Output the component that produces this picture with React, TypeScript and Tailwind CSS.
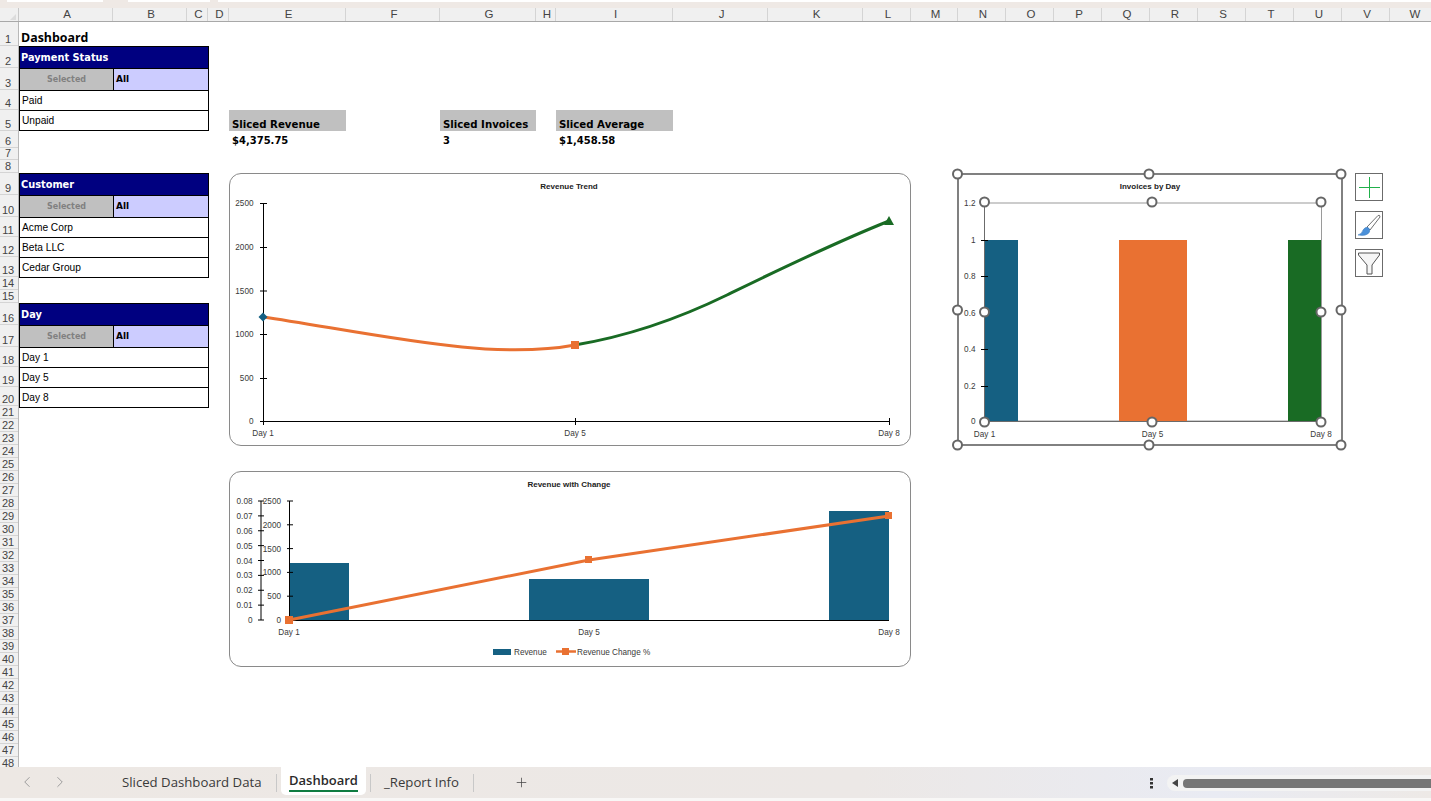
import React from "react";
import { ChevronLeft, ChevronRight, Plus } from "lucide-react";

const cols: [string, number][] = [["A",94],["B",74],["C",21],["D",21],["E",117],["F",94],["G",96],["H",20],["I",117],["J",95],["K",95],["L",48],["M",47],["N",48],["O",48],["P",48],["Q",48],["R",48],["S",48],["T",48],["U",48],["V",48],["W",48]];
const rowH = [24,22,22,20,21,17,12,13,22,22,20,20,20,13,13,22,22,20,20,19,...Array(28).fill(13)];

const sans = "font-['Liberation_Sans',Arial,sans-serif]";
const wide = "font-['DejaVu_Sans',Verdana,sans-serif]";

function Slicer({ title, items, className = "" }: { title: string; items: string[]; className?: string }) {
  return (
    <div className={`w-[190px] border-l border-r border-t border-black ${className}`}>
      <div className={`h-[22px] bg-[#000080] text-white text-[9.8px] font-bold pl-[1px] pt-[1px] flex items-center border-b border-black ${wide}`}>{title}</div>
      <div className="h-[22px] flex border-b border-black">
        <div className={`w-[94px] bg-[#c0c0c0] text-[#808080] text-[8px] font-bold flex items-center justify-center border-r border-black ${wide}`}>Selected</div>
        <div className={`flex-1 bg-[#ccccff] text-black text-[9px] font-bold flex items-center pl-[2px] ${wide}`}>All</div>
      </div>
      {items.map((t) => (
        <div key={t} className={`h-[20px] bg-white text-black text-[10.2px] flex items-center pl-[2px] border-b border-black ${sans}`}>{t}</div>
      ))}
    </div>
  );
}

function Kpi({ label, value, className = "" }: { label: string; value: string; className?: string }) {
  return (
    <div className={className}>
      <div className={`h-[21px] bg-[#c0c0c0] pl-[3px] pb-[1px] flex items-end text-[10.2px] leading-[11px] font-bold text-black ${wide}`}>{label}</div>
      <div className={`h-[17px] pl-[3px] pt-[1px] flex items-center text-[10px] font-bold text-black ${wide}`}>{value}</div>
    </div>
  );
}

const axisText = { fontFamily: "Liberation Sans, Arial, sans-serif", fontSize: 8.2, fill: "#3a3a3a" } as const;

function ChartTitle({ x, y, children }: { x: number; y: number; children: string }) {
  return <text x={x} y={y} textAnchor="middle" style={{ fontFamily: "Liberation Sans, Arial, sans-serif", fontSize: 8, fontWeight: 700, fill: "#222" }}>{children}</text>;
}

function TrendChart() {
  const ticks = [[2500,30],[2000,74],[1500,117.5],[1000,161],[500,205],[0,248]] as const;
  return (
    <div className="w-[682px] h-[273px] rounded-[12px] border border-[#8a8a8a] bg-white overflow-hidden">
      <svg width="680" height="271" viewBox="1 1 680 271" className="block">
        <ChartTitle x={340} y={15.5}>Revenue Trend</ChartTitle>
        <line x1={34.5} y1={30} x2={34.5} y2={248.5} stroke="#000" />
        <line x1={34} y1={248.5} x2={660} y2={248.5} stroke="#000" />
        {ticks.map(([v, y]) => (
          <g key={v}>
            <line x1={31} x2={38} y1={y + 0.5} y2={y + 0.5} stroke="#000" />
            <text x={24.5} y={y + 3} textAnchor="end" style={axisText}>{v}</text>
          </g>
        ))}
        {[[34,"Day 1"],[346,"Day 5"],[660,"Day 8"]].map(([x, l]) => (
          <g key={l as string}>
            <line x1={(x as number)+0.5} x2={(x as number)+0.5} y1={245} y2={252} stroke="#000" />
            <text x={x as number} y={263} textAnchor="middle" style={axisText}>{l}</text>
          </g>
        ))}
        <path d="M34 144 C 90 152, 170 168, 233 174 C 260 177, 310 179, 346 172" fill="none" stroke="#e97132" strokeWidth="3" />
        <path d="M346 172 C 400 163, 455 143, 498 122 S 600 72, 660 48" fill="none" stroke="#196b24" strokeWidth="3" />
        <polygon points="34,139.5 38.5,144 34,148.5 29.5,144" fill="#156082" />
        <rect x={342} y={168} width={8} height={8} fill="#e97132" />
        <polygon points="660,43 665,52 655,52" fill="#196b24" />
      </svg>
    </div>
  );
}

function ComboChart() {
  const left = [0.08,0.07,0.06,0.05,0.04,0.03,0.02,0.01,0];
  const right = [2500,2000,1500,1000,500,0];
  return (
    <div className="w-[682px] h-[196px] rounded-[12px] border border-[#8a8a8a] bg-white overflow-hidden mt-[25px]">
      <svg width="680" height="194" viewBox="1 1 680 194" className="block">
        <ChartTitle x={340} y={16}>Revenue with Change</ChartTitle>
        <rect x={60} y={92} width={60} height={57} fill="#156082" />
        <rect x={300} y={108} width={120} height={41} fill="#156082" />
        <rect x={600} y={40} width={60} height={109} fill="#156082" />
        <line x1={32} y1={30} x2={32} y2={149} stroke="#000" />
        <line x1={60.5} y1={30} x2={60.5} y2={149} stroke="#000" />
        <line x1={60} y1={149.5} x2={660} y2={149.5} stroke="#000" />
        {left.map((v, i) => {
          const y = 30 + (i * 119) / 8;
          return (
            <g key={v}>
              <line x1={29} x2={35} y1={y} y2={y} stroke="#000" />
              <text x={23.5} y={y + 3} textAnchor="end" style={axisText}>{v}</text>
            </g>
          );
        })}
        {right.map((v, i) => {
          const y = 30 + (i * 119) / 5;
          return (
            <g key={v}>
              <line x1={58} x2={64} y1={y} y2={y} stroke="#000" />
              <text x={52} y={y + 3} textAnchor="end" style={axisText}>{v}</text>
            </g>
          );
        })}
        {[[60,"Day 1"],[360,"Day 5"],[660,"Day 8"]].map(([x, l]) => (
          <text key={l as string} x={x as number} y={164} textAnchor="middle" style={axisText}>{l}</text>
        ))}
        <polyline points="60,149 360,89 660,45" fill="none" stroke="#e97132" strokeWidth="3" />
        <rect x={56} y={145} width={8} height={8} fill="#e97132" />
        <rect x={356} y={85} width={7} height={7} fill="#e97132" />
        <rect x={656} y={41} width={7} height={7} fill="#e97132" />
        <rect x={264} y={178} width={18} height={6} fill="#156082" />
        <text x={285} y={184} style={axisText}>Revenue</text>
        <line x1={327} x2={347} y1={180.5} y2={180.5} stroke="#e97132" strokeWidth="2.5" />
        <rect x={333} y={177} width={7} height={7} fill="#e97132" />
        <text x={348} y={184} style={axisText}>Revenue Change %</text>
      </svg>
    </div>
  );
}

function InvoiceChart() {
  const yt = [[1.2,203],[1,240],[0.8,276],[0.6,312.5],[0.4,349],[0.2,386],[0,421]] as const;
  const outer = [[957.5,174],[1149,174],[1341,174],[957.5,310],[1341,310],[957.5,445],[1149,445],[1341,445]];
  const inner = [[984.5,202],[1152,202],[1321,202],[984.5,312],[1321,312],[984.5,422],[1152,422],[1321,422]];
  return (
    <svg width="410" height="295" viewBox="945 165 410 295" className="block">
      <rect x={958} y={174} width={384} height={271} fill="#fff" stroke="#6b6b6b" strokeWidth="1.7" />
      <ChartTitle x={1150} y={189}>Invoices by Day</ChartTitle>
      <rect x={984.5} y={203} width={337} height={218} fill="none" stroke="#9a9a9a" strokeWidth="1" />
      <rect x={984} y={240} width={34} height={181} fill="#156082" />
      <rect x={1119} y={240} width={68} height={181} fill="#e97132" />
      <rect x={1288} y={240} width={33} height={181} fill="#196b24" />
      <line x1={984.5} x2={984.5} y1={203} y2={422} stroke="#6b6b6b" />
      <line x1={984} x2={1322} y1={421.5} y2={421.5} stroke="#6b6b6b" />
      {yt.map(([v, y]) => (
        <g key={v}>
          <line x1={981} x2={988} y1={y + 0.5} y2={y + 0.5} stroke="#000" />
          <text x={975.5} y={y + 3} textAnchor="end" style={axisText}>{v}</text>
        </g>
      ))}
      {[[984.5,"Day 1"],[1152.5,"Day 5"],[1321,"Day 8"]].map(([x, l]) => (
        <text key={l as string} x={x as number} y={437} textAnchor="middle" style={axisText}>{l}</text>
      ))}
      {[...outer, ...inner].map(([x, y]) => (
        <circle key={`${x}-${y}`} cx={x} cy={y} r={4.5} fill="#fff" stroke="#666" strokeWidth="2" />
      ))}
    </svg>
  );
}

function SideButton({ children }: { children: React.ReactNode }) {
  return <div className="w-[28px] h-[28px] border border-[#6b6b6b] bg-white flex items-center justify-center">{children}</div>;
}

export default function App() {
  return (
    <div className={`w-[1431px] h-[801px] bg-white flex flex-col overflow-hidden ${sans}`}>
      <div className="h-[8px] bg-[#efe9e5] shrink-0 flex gap-[3px] pl-[7px]">
        <div className="w-[96px] h-[2px] bg-white" />
        <div className="w-[82px] h-[2px] bg-white ml-[22px]" />
        <div className="flex-1 h-[2px] bg-white ml-[5px]" />
      </div>
      <div className="h-[14px] shrink-0 flex bg-[#f0f0f0] border-b border-[#a8a8a8]">
        <div className="w-[19px] shrink-0 border-r border-[#c8c8c8] relative">
          <div className="absolute right-[2px] bottom-[1px] w-0 h-0 border-l-[6px] border-l-transparent border-b-[6px] border-b-[#dcdcdc]" />
        </div>
        {cols.map(([c, w]) => (
          <div key={c} className="shrink-0 border-r border-[#d4d4d4] text-[11.5px] leading-[13px] text-[#444] text-center pl-[3px]" style={{ width: w }}>{c}</div>
        ))}
      </div>
      <div className="flex-1 min-h-0 flex overflow-hidden">
        <div className="w-[19px] shrink-0 bg-[#f0f0f0] border-r border-[#b8b8b8] overflow-hidden">
          {rowH.map((h, i) => (
            <div key={i} className="border-b border-[#d4d4d4] text-[11px] leading-[12px] text-[#444] text-center pr-[2px] flex items-end justify-center" style={{ height: h }}>{i + 1}</div>
          ))}
        </div>
        <div className="flex-1 flex min-w-0">
          <div className="w-[210px] shrink-0">
            <div className="h-[24px] pl-[2px] flex items-end text-[12.4px] leading-[16px] font-bold text-black font-['Open_Sans',sans-serif]">Dashboard</div>
            <Slicer title="Payment Status" items={["Paid", "Unpaid"]} />
            <Slicer title="Customer" items={["Acme Corp", "Beta LLC", "Cedar Group"]} className="mt-[42px]" />
            <Slicer title="Day" items={["Day 1", "Day 5", "Day 8"]} className="mt-[25px]" />
          </div>
          <div className="w-[728px] shrink-0 pt-[88px]">
            <div className="flex h-[63px] items-start">
              <Kpi label="Sliced Revenue" value="$4,375.75" className="w-[117px]" />
              <Kpi label="Sliced Invoices" value="3" className="w-[96px] ml-[94px]" />
              <Kpi label="Sliced Average" value="$1,458.58" className="w-[117px] ml-[20px]" />
            </div>
            <TrendChart />
            <ComboChart />
          </div>
          <div className="shrink-0 pt-[143px] flex items-start -ml-[12px]">
            <InvoiceChart />
            <div className="flex flex-col gap-[10px] pt-[8px]">
              <SideButton>
                <div className="w-[21px] h-[21px] flex items-center justify-center relative">
                  <div className="w-[21px] h-px bg-[#21b04b]" />
                  <div className="absolute left-[10px] top-0 w-px h-[21px] bg-[#21b04b]" />
                </div>
              </SideButton>
              <SideButton>
                <svg width="26" height="26" viewBox="0 0 26 26">
                  <path d="M11 15 L22 3.5 Q24 2.5 24 5 L14 18 Z" fill="#fff" stroke="#707070" strokeWidth="1" />
                  <path d="M2 23 Q6 22 7 18 Q9 14.5 12 15.5 Q14.5 17 13.5 20 Q11 24.5 2 23 Z" fill="#4a90d9" stroke="#3a78b8" strokeWidth="0.5" />
                </svg>
              </SideButton>
              <SideButton>
                <svg width="26" height="26" viewBox="0 0 26 26">
                  <path d="M2.5 3 H23.5 V5 L16 15 V24 H11 V15 L2.5 5 Z" fill="#f6f6f6" stroke="#555" strokeWidth="1" />
                </svg>
              </SideButton>
            </div>
          </div>
        </div>
      </div>
      <div className="h-[31px] shrink-0 bg-[linear-gradient(90deg,#ede8e4_0%,#ece8e6_60%,#e9ebf3_85%,#ede9e6_100%)] flex items-start text-[#333]">
        <div className="w-[76px] h-[30px] flex items-center pl-[18px] gap-[15px] text-[#9a9a9a] shrink-0">
          <ChevronLeft size={18} strokeWidth={1.3} />
          <ChevronRight size={18} strokeWidth={1.3} />
        </div>
        <div className="pl-[46px] w-[200px] h-[32px] shrink-0 flex items-center text-[13.2px] text-[#3a3a3a] font-['Open_Sans',sans-serif]">
          <span className="whitespace-nowrap">Sliced Dashboard Data</span>
        </div>
        <div className="w-px h-[18px] mt-[7px] bg-[#c8c8c8] shrink-0" />
        <div className="w-[85px] ml-[4px] h-[28px] bg-white rounded-b-[5px] flex flex-col items-center pt-[3px] shrink-0">
          <span className="text-[13px] leading-[20px] font-semibold text-[#2a2a2a] font-['Open_Sans',sans-serif]">Dashboard</span>
          <div className="w-[69px] h-[2px] bg-[#107c41]" />
        </div>
        <div className="w-px h-[18px] mt-[7px] bg-[#c8c8c8] ml-[4px] shrink-0" />
        <div className="w-[102px] h-[32px] pl-[13px] flex items-center text-[13.2px] text-[#3a3a3a] font-['Open_Sans',sans-serif] shrink-0">_Report Info</div>
        <div className="w-px h-[18px] mt-[7px] bg-[#c8c8c8] shrink-0" />
        <div className="ml-[40px] h-[30px] flex items-center"><Plus size={15} strokeWidth={1.2} className="text-[#444]" /></div>
        <div className="flex-1" />
        <div className="w-[33px] h-[32px] flex items-center pl-[16px] shrink-0">
          <svg width="3" height="11" viewBox="0 0 3 11"><rect width="3" height="2.5" fill="#333" /><rect y="4" width="3" height="2.5" fill="#333" /><rect y="8" width="3" height="2.5" fill="#333" /></svg>
        </div>
        <div className="w-[264px] h-[16px] mt-[8px] bg-[#f3f3f3] rounded-l-[8px] flex items-center pl-[5px] gap-[5px] shrink-0">
          <div className="w-0 h-0 border-y-[4px] border-y-transparent border-r-[6px] border-r-[#444]" />
          <div className="flex-1 h-[9px] bg-[#767676] rounded-l-[4px]" />
        </div>
      </div>
      <div className="h-[3px] bg-[#f8f7f6] shrink-0" />
    </div>
  );
}
